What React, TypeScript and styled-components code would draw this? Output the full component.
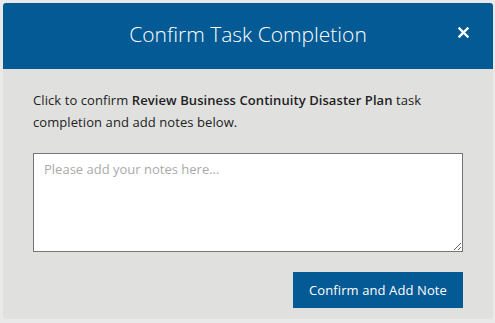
import styled, { createGlobalStyle } from "styled-components";

const GlobalStyle = createGlobalStyle`
  body {
    margin: 0;
    background: #e9e9e9;
    font-family: "Open Sans", "Liberation Sans", sans-serif;
  }
`;

const Modal = styled.div`
  margin: 3px;
  width: 490px;
  height: 316px;
  background: #e0e1df;
  border-radius: 3px;
  overflow: hidden;
  display: flex;
  flex-direction: column;
`;

const Header = styled.div`
  height: 66px;
  background: #045a94;
  color: #fff;
  display: flex;
  align-items: center;
  justify-content: center;
  position: relative;
`;

const Title = styled.h2`
  margin: 0 0 4px;
  font-size: 21px;
  font-weight: 300;
`;

const Close = styled.button`
  position: absolute;
  right: 22px;
  top: 21px;
  width: 16px;
  height: 16px;
  padding: 0;
  border: 0;
  background: none;
  display: flex;
  align-items: center;
  justify-content: center;
  cursor: pointer;
`;

const Body = styled.div`
  padding: 20px 30px 0 30px;
  display: flex;
  flex-direction: column;
`;

const Message = styled.p`
  margin: 0;
  font-size: 13px;
  letter-spacing: 0.08px;
  line-height: 22px;
  color: #222;
`;

const Strong = styled.b`
  font-weight: 600;
`;

const Notes = styled.textarea`
  margin-top: 20px;
  width: 430px;
  height: 99px;
  box-sizing: border-box;
  border: 1px solid #767676;
  background: #fff;
  padding: 6px 10px;
  font-family: inherit;
  font-size: 13px;
  color: #222;
  resize: vertical;
  &::placeholder {
    color: #aaa;
  }
`;

const Actions = styled.div`
  display: flex;
  justify-content: flex-end;
  margin-top: 20px;
`;

const PrimaryButton = styled.button`
  height: 36px;
  width: 170px;
  border: 0;
  background: #045a94;
  color: #fff;
  font-family: inherit;
  font-size: 13px;
  letter-spacing: 0.1px;
  cursor: pointer;
`;

export default function App() {
  return (
    <>
      <GlobalStyle />
      <Modal>
        <Header>
          <Title>Confirm Task Completion</Title>
          <Close aria-label="Close">
            <svg width="11" height="11" viewBox="0 0 11 11">
              <path d="M1.5 1.5 L9.5 9.5 M9.5 1.5 L1.5 9.5" stroke="#fff" strokeWidth="2.4" strokeLinecap="square" />
            </svg>
          </Close>
        </Header>
        <Body>
          <Message>
            Click to confirm <Strong>Review Business Continuity Disaster Plan</Strong> task
            completion and add notes below.
          </Message>
          <Notes placeholder="Please add your notes here..." />
          <Actions>
            <PrimaryButton>Confirm and Add Note</PrimaryButton>
          </Actions>
        </Body>
      </Modal>
    </>
  );
}
